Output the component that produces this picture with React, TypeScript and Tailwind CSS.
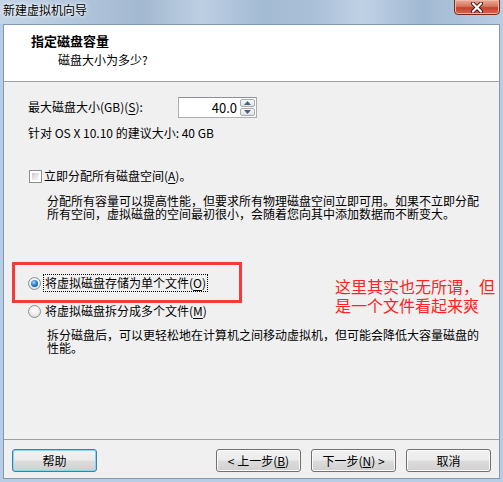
import React from "react";

function Radio({ checked }: { checked?: boolean }) {
  return (
    <span className="w-[13px] h-[13px] rounded-full border border-[#8e8f8f] bg-[radial-gradient(circle_at_50%_35%,#ffffff_0%,#ececec_55%,#cfcfcf_100%)] flex items-center justify-center shrink-0">
      {checked && (
        <span className="w-[7px] h-[7px] rounded-full bg-[radial-gradient(circle_at_40%_35%,#a8dcff_0%,#2c82d8_45%,#0c3d75_100%)]" />
      )}
    </span>
  );
}

function Checkbox() {
  return (
    <span className="w-[13px] h-[13px] border border-[#8e8f8f] bg-white p-[2px] shrink-0 flex">
      <span className="flex-1 bg-[linear-gradient(135deg,#c8c8c8_0%,#e6e6e6_50%,#fbfbfb_100%)]" />
    </span>
  );
}

function Btn({ children, focused }: { children: React.ReactNode; focused?: boolean }) {
  return (
    <div
      className={
        "w-[85px] h-[23px] rounded-[3px] border flex items-center justify-center leading-none text-[12px] bg-[linear-gradient(180deg,#f2f2f2_0%,#ebebeb_48%,#dddddd_52%,#cfcfcf_100%)] " +
        (focused
          ? "border-[#3c7fb1] shadow-[inset_0_0_0_1px_#84d5f6]"
          : "border-[#707070] shadow-[inset_0_0_0_1px_#fbfbfb]")
      }
    >
      {children}
    </div>
  );
}

export default function App() {
  return (
    <div className="w-[503px] h-[482px] bg-[#b7cde5] flex flex-col font-['Noto_Sans_CJK_SC',sans-serif] text-[12px] text-black overflow-hidden">
      {/* title bar */}
      <div className="relative h-[24px] shrink-0 pl-[3px] pt-[3px] bg-[linear-gradient(90deg,#c3d5e8_0%,#aec3d9_18%,#a3b9d1_28%,#bccee2_40%,#a4bbd4_52%,#a9bfd7_62%,#bfd1e5_72%,#a2b9d3_84%,#b9cde3_100%)]">
        <span className="block leading-[14px] text-[12px] text-black [text-shadow:0_0_5px_#ffffff,0_0_3px_#ffffff]">
          新建虚拟机向导
        </span>
        <div className="absolute right-[3px] top-[-1px] w-[46px] h-[16px] rounded-b-[4px] border border-[#7a2a1e] bg-[linear-gradient(180deg,#e9ab98_0%,#d8765e_45%,#c4432d_55%,#d8664c_100%)] shadow-[inset_0_0_0_1px_#f0b8a8] flex items-center justify-center">
          <svg width="14" height="11" viewBox="0 0 14 11">
            <path d="M3 1.5 L11 9.5 M11 1.5 L3 9.5" stroke="#4a1a12" strokeWidth="4" strokeLinecap="round" />
            <path d="M3 1.5 L11 9.5 M11 1.5 L3 9.5" stroke="#ffffff" strokeWidth="2.2" strokeLinecap="round" />
          </svg>
        </div>
      </div>

      {/* client */}
      <div className="flex-1 mx-[3px] mb-[3px] border border-[#8398b2] bg-[#f0f0f0] flex flex-col min-h-0">
        {/* header */}
        <div className="h-[57px] shrink-0 bg-white border-b border-[#a0a0a0] pl-[27px] pt-[9px]">
          <div className="text-[13px] font-bold leading-[14px]">指定磁盘容量</div>
          <div className="ml-[27px] mt-[5px] leading-[14px]">磁盘大小为多少?</div>
        </div>

        {/* body */}
        <div className="flex-1 pl-[24px] flex flex-col">
          <div className="mt-[15px] h-[20px] flex items-center">
            <span className="w-[150px] leading-[16px]">
              最大磁盘大小(GB)(<u className="underline-offset-2">S</u>):
            </span>
            <div className="w-[79px] h-[21px] border border-[#abadb3] border-t-[#8e9197] bg-white flex">
              <div className="flex-1 flex items-center justify-end pr-[2px] leading-none text-[13px]">40.0</div>
              <div className="w-[17px] flex flex-col gap-[1px] p-[1px]">
                <div className="flex-1 rounded-[2px] border border-[#a8abb0] bg-[linear-gradient(180deg,#fafafa,#e2e2e2)] flex items-center justify-center">
                  <svg width="7" height="4" viewBox="0 0 7 4">
                    <path d="M0 4 L3.5 0 L7 4 Z" fill="#4c5f84" />
                  </svg>
                </div>
                <div className="flex-1 rounded-[2px] border border-[#a8abb0] bg-[linear-gradient(180deg,#fafafa,#e2e2e2)] flex items-center justify-center">
                  <svg width="7" height="4" viewBox="0 0 7 4">
                    <path d="M0 0 L7 0 L3.5 4 Z" fill="#4c5f84" />
                  </svg>
                </div>
              </div>
            </div>
          </div>

          <div className="mt-[8px] leading-[16px]">针对 OS X 10.10 的建议大小: 40 GB</div>

          <div className="mt-[27px] h-[16px] flex items-center">
            <span className="ml-[1px]">
              <Checkbox />
            </span>
            <span className="ml-[2px] leading-[16px]">
              立即分配所有磁盘空间(<u className="underline-offset-2">A</u>)。
            </span>
          </div>

          <div className="mt-[10px] pl-[19px] flex flex-col">
            <div className="h-[13px] leading-[13px] whitespace-nowrap">
              分配所有容量可以提高性能，但要求所有物理磁盘空间立即可用。如果不立即分配
            </div>
            <div className="h-[13px] leading-[13px] whitespace-nowrap">
              所有空间，虚拟磁盘的空间最初很小，会随着您向其中添加数据而不断变大。
            </div>
          </div>

          <div className="relative mt-[54px]">
            <div className="absolute left-[-16px] top-[-12px] w-[230px] h-[41px] border-[3px] border-[#f43a3a]" />
            <div className="absolute left-[307px] top-[3px] text-[16px] text-[#ff2323] whitespace-nowrap flex flex-col">
              <div className="h-[19px] leading-[19px]">这里其实也无所谓，但</div>
              <div className="h-[19px] leading-[19px]">是一个文件看起来爽</div>
            </div>

            <div className="h-[18px] flex items-center">
              <Radio checked />
              <span className="ml-[2px] h-[18px] px-[1px] border border-dotted border-black flex items-center leading-[14px]">
                将虚拟磁盘存储为单个文件(<u className="underline-offset-2">O</u>)
              </span>
            </div>
            <div className="mt-[10px] h-[18px] flex items-center">
              <Radio />
              <span className="ml-[4px] leading-[14px]">
                将虚拟磁盘拆分成多个文件(<u className="underline-offset-2">M</u>)
              </span>
            </div>
            <div className="mt-[8px] pl-[19px] flex flex-col">
              <div className="h-[13px] leading-[13px] whitespace-nowrap">
                拆分磁盘后，可以更轻松地在计算机之间移动虚拟机，但可能会降低大容量磁盘的
              </div>
              <div className="h-[13px] leading-[13px] whitespace-nowrap">性能。</div>
            </div>
          </div>
        </div>

        {/* footer */}
        <div className="h-[39px] shrink-0 border-t border-[#a0a0a0] pt-[9px] px-[8px] flex items-start">
          <Btn focused>帮助</Btn>
          <div className="flex-1" />
          <div className="flex gap-[10px]">
            <Btn>
              &lt; 上一步(<u className="underline-offset-1">B</u>)
            </Btn>
            <Btn>
              下一步(<u className="underline-offset-1">N</u>) &gt;
            </Btn>
            <Btn>取消</Btn>
          </div>
        </div>
      </div>
    </div>
  );
}
